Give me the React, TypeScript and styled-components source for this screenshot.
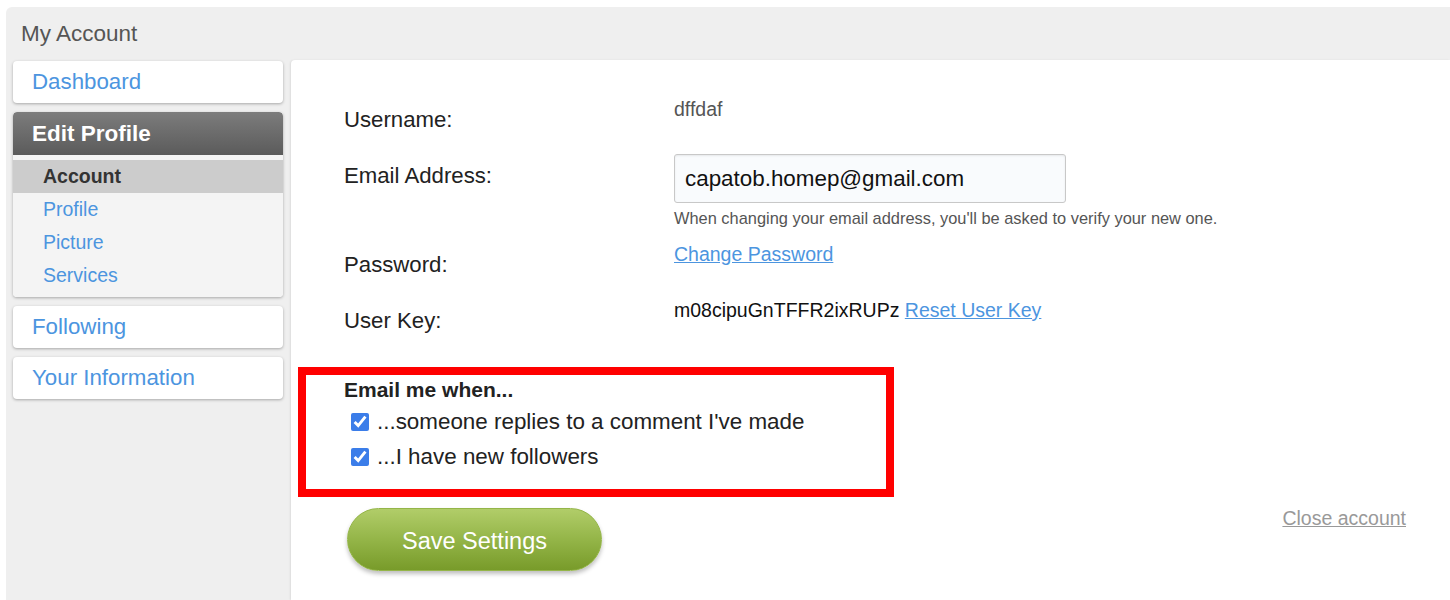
import React from "react";
import styled, { createGlobalStyle } from "styled-components";

const Global = createGlobalStyle`
  html, body { margin: 0; padding: 0; background: #ffffff; overflow: hidden; }
  body { font-family: "Liberation Sans", Arial, sans-serif; }
  #root { padding: 7px 0 0 6px; }
`;

const Shell = styled.div`
  background: #efefef;
  border-top-left-radius: 6px;
  height: 593px;
  display: flex;
  flex-direction: column;
`;

const Header = styled.div`
  height: 53px;
  display: flex;
  align-items: center;
  padding-left: 15px;
  font-size: 22.5px;
  color: #555555;
  flex-shrink: 0;
`;

const Body = styled.div`
  display: flex;
  flex: 1;
  min-height: 0;
`;

const Sidebar = styled.nav`
  width: 270px;
  padding: 1px 8px 0 7px;
  display: flex;
  flex-direction: column;
  gap: 9px;
  flex-shrink: 0;
`;

const Card = styled.div`
  background: #ffffff;
  border-radius: 4px;
  box-shadow: 0 1px 3px rgba(0, 0, 0, 0.3);
  overflow: hidden;
`;

const CardLink = styled.a`
  display: flex;
  align-items: center;
  height: 42px;
  padding-left: 19px;
  font-size: 22.3px;
  color: #4c95df;
  text-decoration: none;
`;

const CardHeader = styled.div`
  display: flex;
  align-items: center;
  height: 43px;
  padding-left: 19px;
  font-size: 22.5px;
  font-weight: bold;
  color: #ffffff;
  background: linear-gradient(#7c7c7c, #5b5b5b);
  border-radius: 4px 4px 0 0;
`;

const SubList = styled.div`
  background: #f4f4f4;
  padding: 5px 0;
`;

const SubItem = styled.a<{ $active?: boolean }>`
  display: flex;
  align-items: center;
  height: 33px;
  padding-left: 30px;
  font-size: 19.5px;
  text-decoration: none;
  background: ${(p) => (p.$active ? "#cccccc" : "transparent")};
  color: ${(p) => (p.$active ? "#333333" : "#4c95df")};
  font-weight: ${(p) => (p.$active ? "bold" : "normal")};
`;

const Main = styled.main`
  flex: 1;
  background: #ffffff;
  border-top-left-radius: 4px;
  box-shadow: -1px 0 2px rgba(0, 0, 0, 0.08);
  padding: 38px 44px 0 7px;
  display: flex;
  flex-direction: column;
`;

const Form = styled.div`
  margin-left: 46px;
  display: flex;
  flex-direction: column;
`;

const Row = styled.div<{ $pad: number }>`
  display: grid;
  grid-template-columns: 330px 1fr;
  padding-bottom: ${(p) => p.$pad}px;
`;

const Label = styled.div`
  font-size: 22.2px;
  line-height: 25px;
  padding-top: 9px;
  color: #222222;
`;

const Value = styled.div<{ $muted?: boolean }>`
  font-size: 19.5px;
  line-height: 23px;
  color: ${(p) => (p.$muted ? "#555555" : "#111111")};
`;

const Input = styled.input`
  box-sizing: border-box;
  width: 392px;
  height: 49px;
  border: 1px solid #c8c8c8;
  border-radius: 3px;
  background: #f9fbfd;
  box-shadow: inset 0 1px 2px rgba(0, 0, 0, 0.08);
  padding: 0 10px;
  font-family: "Liberation Sans", Arial, sans-serif;
  font-size: 22.4px;
  color: #111111;
  outline: none;
`;

const Help = styled.div`
  margin-top: 6px;
  font-size: 16.4px;
  line-height: 18px;
  color: #555555;
`;

const Link = styled.a`
  color: #4c95df;
  text-decoration: underline;
  font-size: 19.5px;
`;

const Notify = styled.fieldset`
  margin: 12px 0 0 0;
  width: 596px;
  box-sizing: border-box;
  border: 8px solid #ff0000;
  padding: 3px 0 15px 38px;
  min-inline-size: 0;
`;

const NotifyTitle = styled.div`
  font-size: 21px;
  font-weight: bold;
  line-height: 24px;
  color: #222222;
  margin-bottom: 2px;
`;

const Check = styled.label`
  display: flex;
  align-items: center;
  gap: 8px;
  height: 35px;
  padding-left: 7px;
  font-size: 22.4px;
  color: #222222;
`;

const Box = styled.input`
  width: 18px;
  height: 18px;
  margin: 0;
  accent-color: #3b7de9;
`;

const Actions = styled.div`
  margin-top: 11px;
  display: flex;
  justify-content: space-between;
  align-items: flex-start;
`;

const SaveButton = styled.button`
  margin-left: 49px;
  width: 255px;
  height: 63px;
  padding: 4px 0 0 0;
  border-radius: 32px;
  border: 1px solid #94b548;
  background: linear-gradient(#b1cd69, #94b548 50%, #789b2a);
  box-shadow: 0 3px 4px rgba(0, 0, 0, 0.25);
  color: #ffffff;
  font-family: "Liberation Sans", Arial, sans-serif;
  font-size: 23.5px;
  cursor: pointer;
`;

const CloseLink = styled.a`
  margin-top: -1px;
  font-size: 19.5px;
  color: #999999;
  text-decoration: underline;
  line-height: 23px;
`;

export default function App() {
  return (
    <>
      <Global />
      <Shell>
        <Header>My Account</Header>
        <Body>
          <Sidebar>
            <Card>
              <CardLink href="#">Dashboard</CardLink>
            </Card>
            <Card>
              <CardHeader>Edit Profile</CardHeader>
              <SubList>
                <SubItem $active>Account</SubItem>
                <SubItem href="#">Profile</SubItem>
                <SubItem href="#">Picture</SubItem>
                <SubItem href="#">Services</SubItem>
              </SubList>
            </Card>
            <Card>
              <CardLink href="#">Following</CardLink>
            </Card>
            <Card>
              <CardLink href="#">Your Information</CardLink>
            </Card>
          </Sidebar>
          <Main>
            <Form>
              <Row $pad={22}>
                <Label>Username:</Label>
                <Value $muted>dffdaf</Value>
              </Row>
              <Row $pad={16}>
                <Label>Email Address:</Label>
                <div>
                  <Input defaultValue="capatob.homep@gmail.com" />
                  <Help>When changing your email address, you'll be asked to verify your new one.</Help>
                </div>
              </Row>
              <Row $pad={22}>
                <Label>Password:</Label>
                <Value>
                  <Link href="#">Change Password</Link>
                </Value>
              </Row>
              <Row $pad={22}>
                <Label>User Key:</Label>
                <Value>
                  m08cipuGnTFFR2ixRUPz <Link href="#">Reset User Key</Link>
                </Value>
              </Row>
            </Form>
            <Notify>
              <NotifyTitle>Email me when...</NotifyTitle>
              <Check>
                <Box type="checkbox" defaultChecked />
                ...someone replies to a comment I've made
              </Check>
              <Check>
                <Box type="checkbox" defaultChecked />
                ...I have new followers
              </Check>
            </Notify>
            <Actions>
              <SaveButton>Save Settings</SaveButton>
              <CloseLink href="#">Close account</CloseLink>
            </Actions>
          </Main>
        </Body>
      </Shell>
    </>
  );
}
